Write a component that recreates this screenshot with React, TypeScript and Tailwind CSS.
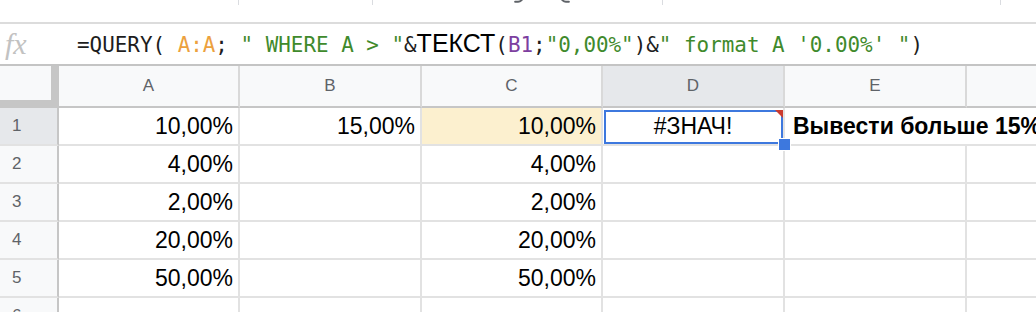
import { Undo2, Redo2 } from 'lucide-react'

const COLS = ['A', 'B', 'C', 'D', 'E']
const WIDTHS = ['w-[181px]', 'w-[182px]', 'w-[181px]', 'w-[182px]', 'w-[182px]']

const ROWS: { a?: string; b?: string; c?: string }[] = [
  { a: '10,00%', b: '15,00%', c: '10,00%' },
  { a: '4,00%', c: '4,00%' },
  { a: '2,00%', c: '2,00%' },
  { a: '20,00%', c: '20,00%' },
  { a: '50,00%', c: '50,00%' },
  {},
]

const cell = 'h-[38px] shrink-0 border-r-2 border-b-2 border-[#e2e2e2] flex items-center justify-end pr-[5px]'

function Formula() {
  const mono = 'font-["DejaVu_Sans_Mono",monospace] text-[20.9px]'
  const green = 'text-[#3f8a2c]'
  return (
    <div className={`whitespace-pre flex items-baseline text-[#1d1d1d] ${mono}`}>
      <span>=QUERY( </span>
      <span className="text-[#eca13e]">A:A</span>
      <span>; </span>
      <span className={green}>" WHERE A &gt; "</span>
      <span>&amp;</span>
      <span className='font-["Liberation_Sans",Arial,sans-serif] text-[25px] text-black'>ТЕКСТ</span>
      <span>(</span>
      <span className="text-[#7d3f9f]">B1</span>
      <span>;</span>
      <span className={green}>"0,00%"</span>
      <span>)&amp;</span>
      <span className={green}>" format A '0.00%' "</span>
      <span>)</span>
    </div>
  )
}

export default function App() {
  return (
    <div className='w-[1036px] h-[312px] overflow-hidden bg-white font-["Liberation_Sans",Arial,sans-serif] text-black'>
      {/* toolbar remnant */}
      <div className="h-[24px] border-b-2 border-[#dcdcdc] overflow-hidden flex items-start">
        <span className="ml-[238px] w-px h-[5px] bg-[#dadce0]" />
        <span className="ml-[133px] w-px h-[5px] bg-[#dadce0]" />
        <Undo2 size={20} strokeWidth={2.5} className="ml-[133px] -mt-[15px] text-[#5f6368]" />
        <Redo2 size={20} strokeWidth={2.5} className="ml-[32px] -mt-[15px] text-[#5f6368]" />
        <span className="ml-[84px] w-px h-[5px] bg-[#dadce0]" />
        <span className="ml-[337px] w-px h-[5px] bg-[#dadce0]" />
      </div>

      {/* formula bar */}
      <div className="h-[42px] border-b-2 border-[#c4c4c4] flex items-center">
        <span className='w-[77px] pl-[5px] font-["Liberation_Serif",serif] italic text-[30px] text-[#c2c2c2] leading-none'>fx</span>
        <Formula />
      </div>

      {/* column headers */}
      <div className="flex h-[42px]">
        <div className="w-[59px] shrink-0 bg-[#f8f9fa] border-r-[8px] border-b-[8px] border-[#c6c6c6]" />
        {COLS.map((c, i) => (
          <div
            key={c}
            className={`${WIDTHS[i]} shrink-0 border-r-2 border-b-2 border-[#d9d9d9] border-b-[#c6c6c6] flex items-center justify-center text-[17px] text-[#5f6368] ${c === 'D' ? 'bg-[#e6e8eb]' : 'bg-[#f8f9fa]'}`}
          >
            {c}
          </div>
        ))}
        <div className="flex-1 bg-[#f8f9fa] border-b-2 border-[#c6c6c6]" />
      </div>

      {/* rows */}
      {ROWS.map((r, i) => (
        <div key={i} className="flex text-[23px]">
          <div
            className={`w-[59px] h-[38px] shrink-0 border-r-2 border-r-[#c6c6c6] border-b-2 border-b-[#e2e2e2] flex items-center pl-[12px] text-[17px] text-[#5f6368] ${i === 0 ? 'bg-[#e6e8eb]' : 'bg-[#f8f9fa]'}`}
          >
            {i + 1}
          </div>
          <div className={`${cell} w-[181px]`}>{r.a}</div>
          <div className={`${cell} w-[182px]`}>{r.b}</div>
          <div className={`${cell} w-[181px] ${i === 0 ? 'bg-[#fcf0cf]' : ''}`}>{r.c}</div>
          {i === 0 ? (
            <div className="relative h-[38px] w-[182px] shrink-0 border-r-2 border-b-2 border-[#e2e2e2] flex items-center justify-center">
              #ЗНАЧ!
              <div className="absolute left-[1px] top-[2px] right-0 bottom-0 border-2 border-[#3d78de]" />
              <div className="absolute right-0 top-[2px] w-0 h-0 border-t-[8px] border-l-[8px] border-t-[#cc3b2f] border-l-transparent" />
              <div className="absolute left-[175px] top-[30px] w-[13px] h-[13px] bg-[#3d78de] border border-white z-10" />
            </div>
          ) : (
            <div className={`${cell} w-[182px]`} />
          )}
          {i === 0 ? (
            <div className="relative z-0 h-[38px] w-[182px] shrink-0 border-b-2 border-[#e2e2e2] flex items-center pl-[8px] whitespace-nowrap font-bold overflow-visible">
              Вывести больше 15%
            </div>
          ) : (
            <div className={`${cell} w-[182px]`} />
          )}
          <div className="h-[38px] flex-1 border-b-2 border-[#e2e2e2]" />
        </div>
      ))}
    </div>
  )
}
